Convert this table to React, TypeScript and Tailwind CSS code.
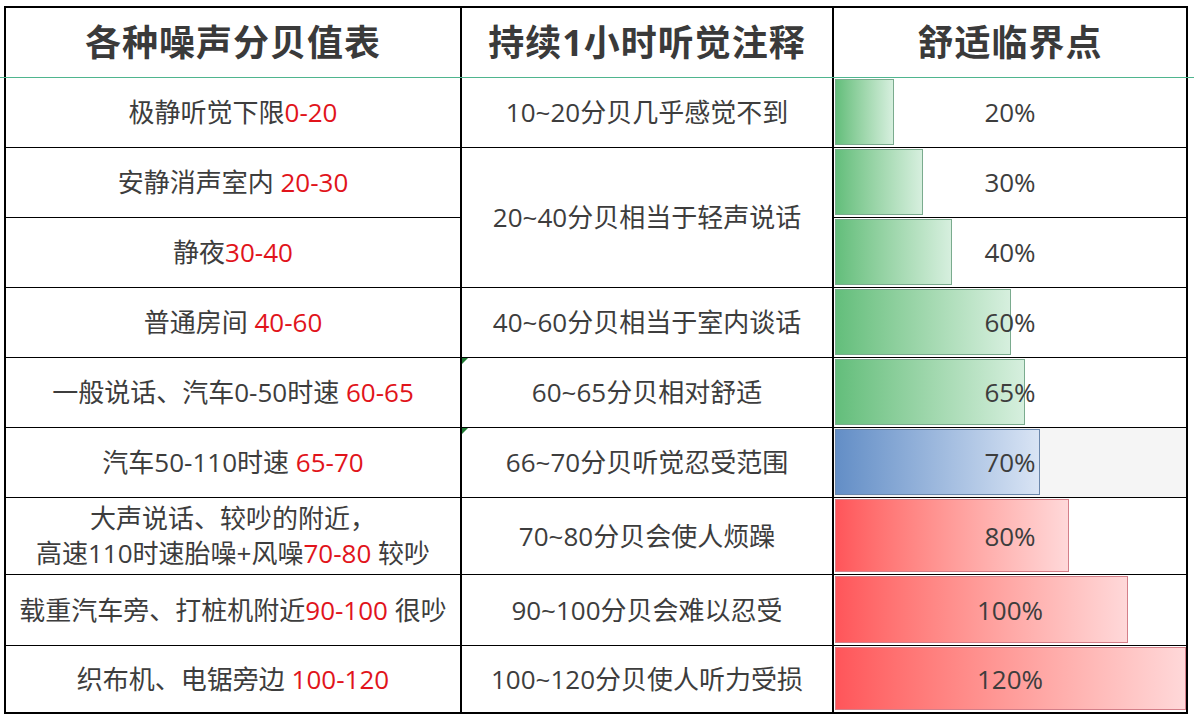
import React from "react";

type Tone = "green" | "blue" | "red";

type Row = {
  pre: string;
  red: string;
  post?: string;
  lines?: string;
  note?: string;
  pct: number;
  tone: Tone;
  flag?: boolean;
  shaded?: boolean;
};

const rows: Row[] = [
  { pre: "极静听觉下限", red: "0-20", note: "10~20分贝几乎感觉不到", pct: 20, tone: "green" },
  { pre: "安静消声室内 ", red: "20-30", note: "20~40分贝相当于轻声说话", pct: 30, tone: "green" },
  { pre: "静夜", red: "30-40", pct: 40, tone: "green" },
  { pre: "普通房间 ", red: "40-60", note: "40~60分贝相当于室内谈话", pct: 60, tone: "green" },
  { pre: "一般说话、汽车0-50时速 ", red: "60-65", note: "60~65分贝相对舒适", pct: 65, tone: "green", flag: true },
  { pre: "汽车50-110时速 ", red: "65-70", note: "66~70分贝听觉忍受范围", pct: 70, tone: "blue", flag: true, shaded: true },
  { lines: "大声说话、较吵的附近，", pre: "高速110时速胎噪+风噪", red: "70-80", post: " 较吵", note: "70~80分贝会使人烦躁", pct: 80, tone: "red" },
  { pre: "载重汽车旁、打桩机附近", red: "90-100", post: " 很吵", note: "90~100分贝会难以忍受", pct: 100, tone: "red" },
  { pre: "织布机、电锯旁边 ", red: "100-120", note: "100~120分贝使人听力受损", pct: 120, tone: "red" },
];

const barTone: Record<Tone, string> = {
  green: "bg-linear-to-r from-[#63be7b] to-[#d6efde] border-[#7aab8e]",
  blue: "bg-linear-to-r from-[#638ec6] to-[#d9e4f4] border-[#6a86ab]",
  red: "bg-linear-to-r from-[#ff555a] to-[#ffd8d9] border-[#d47f89]",
};

const font = { fontFamily: '"Open Sans", "Noto Sans CJK SC", sans-serif' };

export default function App() {
  return (
    <div className="relative w-[1194px] h-[720px] bg-white overflow-hidden" style={font}>
      <div className="ml-[4px] mt-[6px] w-[1184px] border-2 border-black bg-black grid grid-cols-[454px_370px_352px] grid-rows-[69px_69px_69px_69px_69px_69px_69px_76px_70px_66px] gap-x-[2px] gap-y-px">
        {["各种噪声分贝值表", "持续1小时听觉注释", "舒适临界点"].map((h) => (
          <div
            key={h}
            className="bg-white flex items-center justify-center text-[36px] font-bold tracking-[1px] text-[#3a3a3a]"
          >
            {h}
          </div>
        ))}

        {rows.map((r, i) => (
          <React.Fragment key={i}>
            {/* noise source */}
            <div className="bg-white flex flex-col items-center justify-center text-[26px] leading-[35px] text-[#3d3d3d] whitespace-pre">
              {r.lines && <span>{r.lines}</span>}
              <span>
                {r.pre}
                <span className="text-[#e1141b]">{r.red}</span>
                {r.post}
              </span>
            </div>

            {/* note, the 20~40 one spans two rows */}
            {r.note && (
              <div
                className={`relative bg-white flex items-center justify-center text-[26px] text-[#3d3d3d] ${
                  i === 1 ? "row-span-2" : ""
                }`}
              >
                {r.flag && (
                  <svg className="absolute left-0 top-0" width="6" height="6" viewBox="0 0 6 6">
                    <path d="M0 0H6L0 6Z" fill="#1f7a35" />
                  </svg>
                )}
                {r.note}
              </div>
            )}

            {/* data bar */}
            <div className={`grid ${r.shaded ? "bg-[#f5f5f5]" : "bg-white"}`}>
              <div
                className={`col-start-1 row-start-1 justify-self-start self-stretch ml-px mt-px mb-[2px] border ${barTone[r.tone]}`}
                style={{ width: Math.round((r.pct / 120) * 351) }}
              />
              <div className="col-start-1 row-start-1 place-self-center text-[26px] text-[#3d3d3d]">
                {r.pct}%
              </div>
            </div>
          </React.Fragment>
        ))}
      </div>

      {/* freeze-pane line under the header */}
      <div className="absolute left-0 right-0 top-[77px] h-px bg-[#4fb58e]" />
    </div>
  );
}
